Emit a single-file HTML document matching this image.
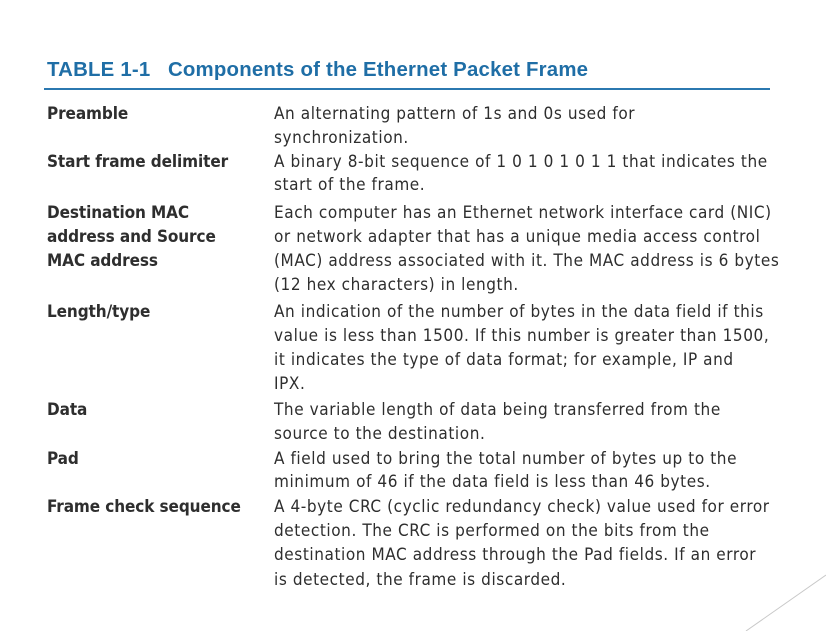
<!DOCTYPE html>
<html><head><meta charset="utf-8"><style>
html,body{margin:0;padding:0;background:#fff;width:826px;height:631px;overflow:hidden;position:relative}
.t{position:absolute;left:47px;top:59px;font:bold 20.4px "Liberation Sans",sans-serif;color:#1f6ea6;white-space:nowrap;letter-spacing:0.2px}
.rule{position:absolute;left:44px;top:88px;width:726px;height:2px;background:#2b78b0}
.l{position:absolute;font:17px "DejaVu Sans Condensed","Liberation Sans",sans-serif;color:#2e2e2e;white-space:nowrap;line-height:20px;letter-spacing:0.58px;margin-top:1px}
.b{font-weight:bold;left:47px;letter-spacing:-0.1px}
.r{left:274px}
</style></head><body>
<div class="t">TABLE 1-1&nbsp;&nbsp;&nbsp;Components of the Ethernet Packet Frame</div>
<div class="rule"></div>
<div class="l b" style="top:103px">Preamble</div>
<div class="l r" style="top:103px">An alternating pattern of 1s and 0s used for</div>
<div class="l r" style="top:127px">synchronization.</div>
<div class="l b" style="top:151px">Start frame delimiter</div>
<div class="l r" style="top:151px">A binary 8-bit sequence of 1 0 1 0 1 0 1 1 that indicates the</div>
<div class="l r" style="top:174px">start of the frame.</div>
<div class="l b" style="top:202px">Destination MAC</div>
<div class="l b" style="top:226px">address and Source</div>
<div class="l b" style="top:250px">MAC address</div>
<div class="l r" style="top:202px">Each computer has an Ethernet network interface card (NIC)</div>
<div class="l r" style="top:226px">or network adapter that has a unique media access control</div>
<div class="l r" style="top:250px">(MAC) address associated with it. The MAC address is 6 bytes</div>
<div class="l r" style="top:274px">(12 hex characters) in length.</div>
<div class="l b" style="top:301px">Length/type</div>
<div class="l r" style="top:301px">An indication of the number of bytes in the data field if this</div>
<div class="l r" style="top:325px">value is less than 1500. If this number is greater than 1500,</div>
<div class="l r" style="top:349px">it indicates the type of data format; for example, IP and</div>
<div class="l r" style="top:373px">IPX.</div>
<div class="l b" style="top:399px">Data</div>
<div class="l r" style="top:399px">The variable length of data being transferred from the</div>
<div class="l r" style="top:423px">source to the destination.</div>
<div class="l b" style="top:448px">Pad</div>
<div class="l r" style="top:448px">A field used to bring the total number of bytes up to the</div>
<div class="l r" style="top:471px">minimum of 46 if the data field is less than 46 bytes.</div>
<div class="l b" style="top:496px">Frame check sequence</div>
<div class="l r" style="top:496px">A 4-byte CRC (cyclic redundancy check) value used for error</div>
<div class="l r" style="top:520px">detection. The CRC is performed on the bits from the</div>
<div class="l r" style="top:544px">destination MAC address through the Pad fields. If an error</div>
<div class="l r" style="top:569px">is detected, the frame is discarded.</div>
<svg style="position:absolute;left:0;top:0" width="826" height="631"><line x1="826" y1="575" x2="746" y2="631" stroke="#c8c8c8" stroke-width="1"/></svg>
</body></html>
